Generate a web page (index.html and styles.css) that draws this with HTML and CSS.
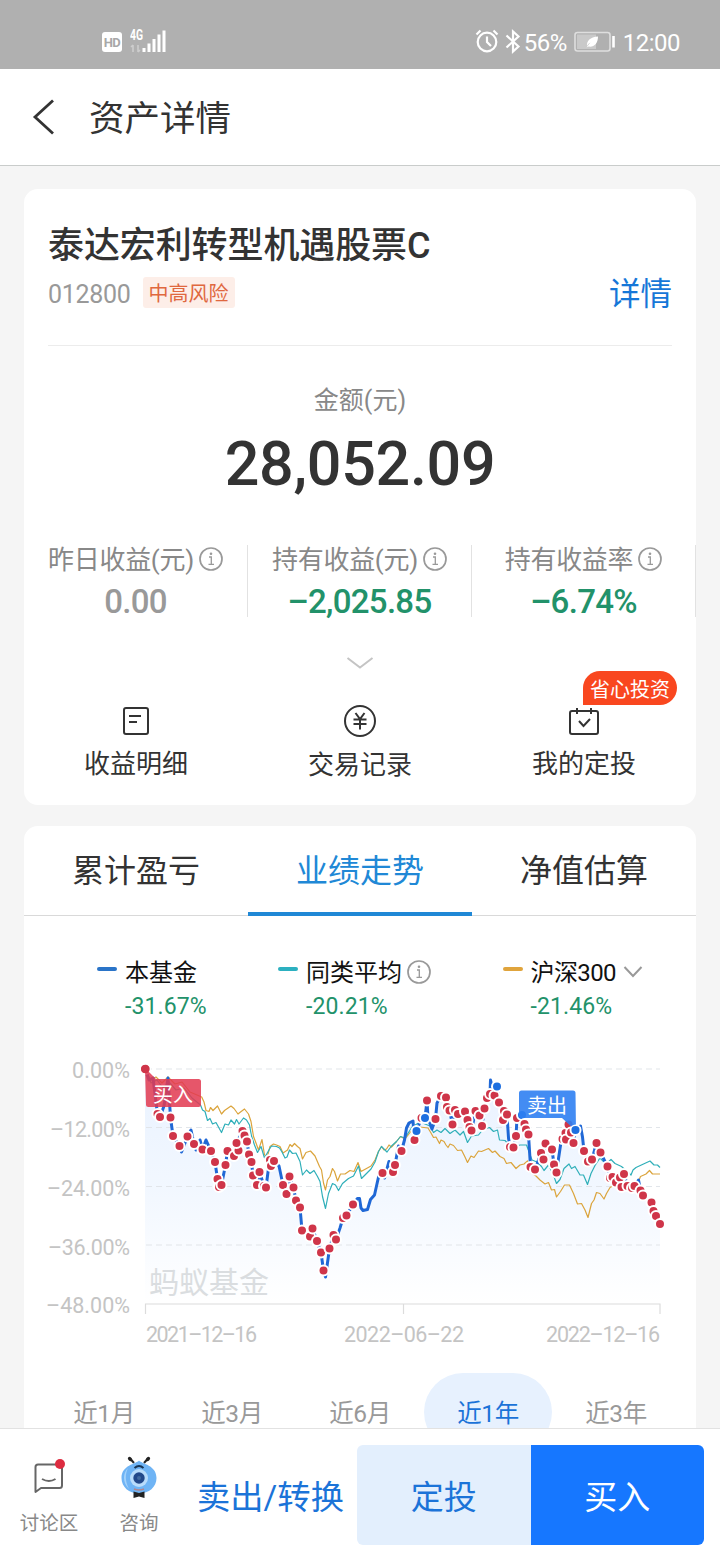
FILE: index.html
```html
<!DOCTYPE html>
<html lang="zh-CN">
<head>
    <meta charset="UTF-8">
    <meta name="viewport" content="width=device-width, initial-scale=1.0">
    <title>资产详情</title>
    <link rel="stylesheet" href="styles.css">
</head>
<body>

<div class="app">
    <div class="status-bar">
        <div class="status-left">
            <span class="hd">HD</span>
            <svg width="37" height="32" viewBox="0 -3 37 32">
                <text x="0" y="10.500" class="net" textLength="13" lengthAdjust="spacingAndGlyphs">4G</text>
                <path d="M3 16v7M1 18l2-2M8 16v7M8 23l2-2" stroke="#cdcdcd" stroke-width="1.600" fill="none"/>
                <path d="M14 19v4M19 14.500v8.500M24 10v13M29 5.500v17.500M34 1.500v21.500" stroke="#fff" stroke-width="3" stroke-linecap="butt"/>
            </svg>
        </div>
        <div class="status-right">
            <svg width="24" height="26" viewBox="0 0 24 26" fill="none" stroke="#fff" stroke-width="2.200">
                <circle cx="12" cy="13" r="9.300"/>
                <path d="M12 7.500v5.500l4 4M1.500 5.500l4-4M22.500 5.500l-4-4"/>
            </svg>
            <svg class="bluetooth" width="16" height="26" viewBox="0 0 16 26" fill="none" stroke="#fff" stroke-width="2.200">
                <path d="M1.500 6.500l12 11-5.500 5V2.500l5.500 5-12 11"/>
            </svg>
            <span class="percent">56%</span>
            <svg class="battery" width="41" height="22" viewBox="0 0 41 22">
                <rect x="1" y="1.500" width="35" height="18.500" rx="2.500" fill="none" stroke="#dedede" stroke-width="1.600"/>
                <rect x="3" y="3.500" width="19" height="14.500" fill="#c9c9c9"/>
                <path d="M12.500 16.500c1-1 2-3 4-5c-2 1-3 2.500-3.500 3.500c-.5-5 3-9 11-9.500c0 7-4 11-9.500 10z" fill="#fff"/>
                <path d="M39.500 5v11.500" stroke="#fff" stroke-width="2.600"/>
            </svg>
            <span class="clock">12:00</span>
        </div>
    </div>

    <div class="nav">
        <svg width="24" height="38" viewBox="0 0 24 38" fill="none" stroke="#333" stroke-width="2.800">
            <path d="M21 2.500L3 19l18 16.500"/>
        </svg>
        <h1>资产详情</h1>
    </div>

    <div class="content">
        <div class="card asset">
            <h2 class="fund-name">泰达宏利转型机遇股票C</h2>
            <div class="fund-info">
                <span class="fund-code">012800</span>
                <span class="risk-tag">中高风险</span>
                <a class="detail-link">详情</a>
            </div>
            <div class="amount-label">金额(元)</div>
            <div class="amount">28,052.09</div>

            <div class="stats">
                <div class="stat">
                    <div class="stat-label">昨日收益(元)<svg class="info" viewBox="0 0 24 24"><use href="#icon-info"/></svg></div>
                    <div class="stat-value flat">0.00</div>
                </div>
                <div class="stat">
                    <div class="stat-label">持有收益(元)<svg class="info" viewBox="0 0 24 24"><use href="#icon-info"/></svg></div>
                    <div class="stat-value">–2,025.85</div>
                </div>
                <div class="stat">
                    <div class="stat-label">持有收益率<svg class="info" viewBox="0 0 24 24"><use href="#icon-info"/></svg></div>
                    <div class="stat-value">–6.74%</div>
                </div>
            </div>

            <svg class="expand" width="28" height="14" viewBox="0 0 28 14" fill="none" stroke="#c4c4c4" stroke-width="2">
                <path d="M1.500 2L14 11.500L26.500 2"/>
            </svg>

            <div class="actions">
                <div class="action">
                    <svg width="34" height="34" viewBox="0 0 34 34" fill="none" stroke="#333" stroke-width="2">
                        <rect x="5" y="4" width="24" height="26" rx="2"/>
                        <path d="M10 12h12M10 18h8"/>
                    </svg>
                    <span>收益明细</span>
                </div>
                <div class="action">
                    <svg width="34" height="34" viewBox="0 0 34 34" fill="none" stroke="#333" stroke-width="2">
                        <circle cx="17" cy="17" r="15"/>
                        <path d="M12.500 9l4.500 6 4.500-6M17 15v10.500M10.500 15.500h13M10.500 20h13"/>
                    </svg>
                    <span class="lower">交易记录</span>
                </div>
                <div class="action">
                    <svg width="34" height="34" viewBox="0 0 34 34" fill="none" stroke="#333" stroke-width="2">
                        <rect x="3" y="7" width="28" height="23" rx="2"/>
                        <path d="M10 4v6M24 4v6M12 17l4.500 5 6.500-7"/>
                    </svg>
                    <span>我的定投</span>
                    <em class="badge">省心投资</em>
                </div>
            </div>
        </div>

        <div class="card trend">
            <div class="tabs">
                <div class="tab">累计盈亏</div>
                <div class="tab active">业绩走势</div>
                <div class="tab">净值估算</div>
            </div>

            <div class="legend">
                <div class="legend-item fund">
                    <div class="legend-name">本基金</div>
                    <div class="legend-value">-31.67%</div>
                </div>
                <div class="legend-item peer">
                    <div class="legend-name">同类平均<svg class="info" viewBox="0 0 24 24"><use href="#icon-info"/></svg></div>
                    <div class="legend-value">-20.21%</div>
                </div>
                <div class="legend-item index">
                    <div class="legend-name">沪深300<svg class="arrow" width="20" height="14" viewBox="0 0 20 14" fill="none" stroke="#999" stroke-width="2"><path d="M1.500 2L10 11l8.500-9"/></svg></div>
                    <div class="legend-value">-21.46%</div>
                </div>
            </div>

            <svg class="chart" width="672" height="310" viewBox="24 1040 672 310">
                <defs>
                    <linearGradient id="area-fill" gradientUnits="userSpaceOnUse" x1="0" y1="1080" x2="0" y2="1304">
                        <stop offset="0" stop-color="#1677ff" stop-opacity=".09"/>
                        <stop offset=".5" stop-color="#1677ff" stop-opacity=".055"/>
                        <stop offset="1" stop-color="#1677ff" stop-opacity="0"/>
                    </linearGradient>
                </defs>
                <path id="area" fill="url(#area-fill)"/>
                <g stroke="#e1e5ea" stroke-width="1.200" stroke-dasharray="6 4">
                    <path d="M146 1069H660M146 1127.500H660M146 1186.500H660M146 1245H660"/>
                </g>
                <path d="M145.500 1314V1304H660V1314M403.500 1304V1314" fill="none" stroke="#dcdcdc" stroke-width="1.200"/>
                <g class="axis-y">
                    <text x="72" y="1078" textLength="58">0.00%</text>
                    <text x="50" y="1137" textLength="80">–12.00%</text>
                    <text x="47" y="1196" textLength="83">–24.00%</text>
                    <text x="48" y="1255" textLength="82">–36.00%</text>
                    <text x="46" y="1313" textLength="84">–48.00%</text>
                </g>
                <g class="axis-x">
                    <text x="146" y="1342" textLength="111">2021–12–16</text>
                    <text x="344" y="1342" textLength="120">2022–06–22</text>
                    <text x="546" y="1342" textLength="114">2022–12–16</text>
                </g>
                <text x="149" y="1293" class="watermark">蚂蚁基金</text>
                <g fill="none" stroke-width="1.200" stroke-linejoin="round">
                    <path stroke="#dba43c" d="M146 1069L150 1080 156 1077 162 1083 168 1077 175 1084 182 1082 190 1092 201.700 1097 204 1102 206 1110.500 209 1111.500 210.500 1107.500 213 1110.500 217.500 1106 221.500 1114 224.500 1110.500 231 1106 234 1108.500 238 1114 240.500 1112 244.500 1109 248.500 1114 251 1121.500 253.500 1136.500 256 1143 258.500 1150 262 1139.500 264.500 1155 267.500 1156 270 1146.500 273.500 1144 276.500 1145 280 1146.500 283 1153 287.500 1150 290 1144.500 292 1146.500 294.500 1143.500 297.500 1146.500 300 1148.500 302.500 1159 306 1152.500 310.500 1151 315 1156 319.500 1166.500 321.500 1170 323.500 1183 325.500 1190 327.500 1180 330 1176.500 332.500 1168.500 334.500 1171.500 337.500 1181 340.500 1174 345 1174 350 1170.500 354 1171.500 358 1162.500 361 1171.500 366.500 1168.500 371 1166 375 1160 378.500 1151.500 381.500 1146.500 384 1150 386.500 1149 389 1145 391.500 1147 396.500 1141.500 400.500 1136.500 405 1139 412 1130 420 1127 428 1128 431 1133 433.500 1137.500 436 1137 439.500 1143.500 441 1140 444 1141.500 446 1145 448 1147.500 450 1144 453.500 1145.500 457.500 1150.500 461.500 1150 465 1157 467.500 1162.500 471 1156 474 1157.500 478.500 1151 481.500 1151.500 485 1150 488.500 1148.500 492.500 1152.500 495 1151 500 1156.500 504 1158.500 506.500 1163.500 511 1162.500 516 1168.500 520 1165 524 1164 527.500 1161 530 1172 536 1176 540 1180 545 1184 548.500 1182.500 551.500 1190 554.500 1189.500 556.500 1197 560.500 1191.500 564.500 1185 569.500 1185 573.500 1193.500 577.500 1204 581.500 1203.500 585 1210 588 1217.500 591.500 1203.500 594 1200 596.500 1192.500 600 1193.500 604 1199 606.500 1193.500 610 1187.500 616 1184 624 1179 632 1185 638.500 1181.500 640.500 1176.500 646 1174 649.500 1170.500 652.500 1174 660 1174"/>
                    <path stroke="#2fafb9" d="M146 1069L151 1083 157 1080 163 1088 169 1082 176 1090 184 1088 192 1098 200.500 1105 202.500 1110 205 1111.500 207.500 1120.500 210 1118.500 212.500 1124 216 1122.500 221.500 1132.500 225 1124 228.500 1125 231 1120 234.500 1124 236.500 1119.500 239 1124 243.500 1118 246.500 1120 249.500 1125 251.500 1136 254.500 1145 257.500 1152.500 261 1146.500 264.500 1158 269.500 1149 271.500 1146 276.500 1146.500 279.500 1148 282 1152 285 1158 287 1157 289.500 1150 292.500 1153.500 296 1153 300 1161.500 302.500 1175 306.500 1170 310 1173.500 314 1170.500 317.500 1176.500 320 1181.500 322.500 1196.500 325.500 1208.500 328.500 1193.500 332.500 1183.500 335.500 1185 338.500 1190.500 342.500 1183.500 348.500 1178.500 353.500 1176 358.500 1166 361.500 1178.500 366.500 1173.500 371 1169 375 1162 378.500 1151.500 381.500 1146.500 384 1149 387 1152 391.500 1146 396.500 1141.500 400.500 1136.500 405 1138 412 1127 420 1122 430 1126 433.500 1132.500 437 1130 441 1132.500 445 1128.500 450 1133.500 455 1130 460 1135 463.500 1131.500 467.500 1142.500 471.500 1136 478.500 1135 482.500 1130 489.500 1127.500 493.500 1131.500 497.500 1130 499.500 1140 505 1140.500 512 1148 520 1145 526.500 1145 532 1160 537 1162 541.500 1166.500 544 1170.500 548.500 1165 553 1174 556.500 1183.500 560 1179.500 564 1168.500 569 1164 571.500 1168.500 575 1166.500 580 1175 583.500 1175 587.500 1184.500 591 1173.500 595 1165.500 600 1158 606 1164 611 1159.500 615 1163.500 621.500 1166.500 631 1175 633 1170 636 1167.500 643.500 1164 650 1161 654 1165 657.500 1165 660 1167.500"/>
                </g>
                <path id="fund-line" fill="none" stroke="#2068d6" stroke-width="3" stroke-linejoin="round"/>
                <g id="dots"></g>
                <g class="marker">
                    <path d="M145 1068L156 1079H198.500Q201 1079 201 1081.500V1104.500Q201 1107 198.500 1107H148.500Q146 1107 146 1104.500Z" fill="#e23a52" fill-opacity=".86"/>
                    <text x="153" y="1102">买入</text>
                    <path d="M576 1131L562 1118H521.500Q519 1118 519 1115.500V1093Q519 1090.500 521.500 1090.500H573Q575.500 1090.500 575.500 1093Z" fill="#2f80f2" fill-opacity=".9"/>
                    <text x="527" y="1113">卖出</text>
                </g>
                <circle cx="145.500" cy="1069" r="4.200" fill="#cf3549"/>
                <circle cx="575.500" cy="1130" r="4.800" fill="#1d6fe0" stroke="#fff" stroke-width="1.500"/>
            </svg>

            <div class="ranges">
                <div class="range">近1月</div>
                <div class="range">近3月</div>
                <div class="range">近6月</div>
                <div class="range active">近1年</div>
                <div class="range">近3年</div>
            </div>
        </div>
    </div>

    <div class="bottom-bar">
        <div class="entry">
            <svg width="34" height="42" viewBox="0 0 34 42" fill="none" stroke="#666" stroke-width="2">
                <path d="M3.500 36V11Q3.500 8.500 6 8.500H27.500Q30 8.500 30 11V29.500Q30 32 27.500 32H9Z" stroke-linejoin="round"/>
                <path d="M10 23q7 4 13.500 0"/>
                <circle cx="28" cy="8" r="5" fill="#dd2c40" stroke="none"/>
            </svg>
            <span>讨论区</span>
        </div>
        <div class="entry">
            <svg width="38" height="42" viewBox="0 0 38 42">
                <path d="M14 7L10.500 3M24 7L27.500 3" stroke="#222" stroke-width="2"/>
                <ellipse cx="10" cy="3" rx="2.400" ry="1.800" transform="rotate(45 10 3)" fill="#222"/>
                <ellipse cx="28" cy="3" rx="2.400" ry="1.800" transform="rotate(-45 28 3)" fill="#222"/>
                <path d="M19 4.500C22 8 36.500 9 36.500 22C36.500 31 29 37.500 19 37.500S1.500 31 1.500 22C1.500 9 16 8 19 4.500Z" fill="#6fb4f5"/>
                <path d="M8 12C3 17 2 26 9 33C5 25 5 18 8 12Z" fill="#a3d2fb"/>
                <path d="M14.500 12q4.500-4 9 0" fill="none" stroke="#173455" stroke-width="2"/>
                <circle cx="19" cy="22" r="9" fill="#b9dcfb"/>
                <circle cx="19" cy="22" r="5.700" fill="#23498a"/>
                <circle cx="19" cy="22" r="2" fill="#42699f"/>
                <path d="M14 33q5 2 10 0" fill="none" stroke="#b2868e" stroke-width="1.600"/>
                <path d="M13.500 35.500l5.500 1.500 5.500-1.500v6.500l-5.500-1.500-5.500 1.500z" fill="#222"/>
            </svg>
            <span>咨询</span>
        </div>
        <div class="sell">卖出/转换</div>
        <div class="buttons">
            <div class="btn plan">定投</div>
            <div class="btn buy">买入</div>
        </div>
    </div>
</div>

<svg class="symbols" width="0" height="0">
    <symbol id="icon-info" viewBox="0 0 24 24">
        <circle cx="12" cy="12" r="11" fill="none" stroke="#999" stroke-width="1.700"/>
        <path d="M10 10h2.300v7M9.500 17.300h5.500" fill="none" stroke="#999" stroke-width="1.300"/>
        <circle cx="12" cy="6.700" r="1.300" fill="#999"/>
    </symbol>
</svg>

<script src="chart.js"></script>
</body>
</html>
```
FILE: styles.css
```css
* {
    margin: 0;
    padding: 0;
    box-sizing: border-box;
}

body {
    font-family: Roboto, 'Noto Sans CJK SC', sans-serif;
    background-color: #f5f5f5;
    color: #333;
}

.app {
    width: 720px;
    height: 1560px;
    display: flex;
    flex-direction: column;
    overflow: hidden;
}

.symbols {
    position: absolute;
}

/* status bar */
.status-bar {
    height: 69px;
    flex-shrink: 0;
    padding: 14px 40px 0 102px;
    background-color: #b0b0b0;
    color: #fff;
    display: flex;
    justify-content: space-between;
    align-items: center;
}

.status-left,
.status-right {
    display: flex;
    align-items: center;
}

.hd {
    width: 20px;
    height: 20px;
    margin-right: 8px;
    border-radius: 3px;
    background-color: #fff;
    color: #a8a8a8;
    font-size: 13px;
    font-weight: 700;
    line-height: 21px;
    text-align: center;
    letter-spacing: -0.5px;
}

.net {
    fill: #fff;
    font-size: 14px;
    font-weight: 700;
}

.bluetooth {
    margin: 0 3px 0 6px;
}

.percent,
.clock {
    font-size: 24px;
    line-height: 28px;
    letter-spacing: -0.5px;
    margin-top: 3px;
}

.battery {
    margin: 0 8px 0 7px;
}

/* title bar */
.nav {
    height: 97px;
    flex-shrink: 0;
    padding-left: 32px;
    background-color: #fff;
    border-bottom: 1px solid #c9cccb;
    display: flex;
    align-items: center;
    gap: 33px;
}

.nav h1 {
    padding-top: 3px;
    font-size: 35.5px;
    font-weight: 400;
    line-height: 48px;
}

.content {
    flex: 1;
    min-height: 0;
    padding: 23px 24px 0;
    overflow: hidden;
}

.card {
    background-color: #fff;
    border-radius: 14px;
}

/* asset card */
.asset {
    height: 616px;
    padding-top: 32px;
}

.fund-name {
    padding-left: 24px;
    font-size: 36px;
    font-weight: 500;
    line-height: 50px;
    letter-spacing: -0.1px;
}

.fund-info {
    height: 75px;
    margin: 0 24px;
    padding-top: 6px;
    border-bottom: 1px solid #ececec;
    display: flex;
    align-items: flex-start;
}

.fund-code {
    font-size: 25px;
    line-height: 35px;
    color: #999;
    letter-spacing: -0.3px;
}

.risk-tag {
    height: 31px;
    margin-left: 12px;
    padding: 0 6px;
    border-radius: 3px;
    background-color: #fdeee8;
    color: #e0683f;
    font-size: 20px;
    line-height: 34px;
}

.detail-link {
    margin-left: auto;
    color: #1677d8;
    font-size: 31.5px;
    line-height: 36px;
}

.amount-label {
    margin-top: 37px;
    text-align: center;
    color: #888;
    font-size: 25px;
    line-height: 36px;
}

.amount {
    margin-top: 7px;
    text-align: center;
    font-size: 61px;
    font-weight: 500;
    line-height: 76px;
    letter-spacing: -0.3px;
}

.stats {
    margin-top: 43px;
    height: 72px;
    display: grid;
    grid-template-columns: repeat(3, 1fr);
    grid-template-rows: 72px;
}

.stat {
    border-right: 1px solid #e2e2e2;
    display: flex;
    flex-direction: column;
    align-items: center;
}

.stat-label {
    display: flex;
    align-items: center;
    color: #888;
    font-size: 26px;
    line-height: 30px;
    letter-spacing: -0.3px;
}

.info {
    width: 24px;
    height: 24px;
    margin: -2px 0 0 5px;
}

.stat-value {
    margin-top: 8px;
    color: #22926a;
    font-size: 33px;
    font-weight: 500;
    line-height: 38px;
    letter-spacing: -0.7px;
}

.stat-value.flat {
    color: #999;
}

.expand {
    display: block;
    margin: 39px auto 0;
}

.actions {
    margin-top: 34px;
    display: grid;
    grid-template-columns: repeat(3, 1fr);
}

.action {
    position: relative;
    display: flex;
    flex-direction: column;
    align-items: center;
    font-size: 26px;
    line-height: 36px;
}

.action span {
    margin-top: 8px;
}

.action span.lower {
    margin-top: 9px;
}

.badge {
    position: absolute;
    left: 111px;
    top: -33px;
    width: 94px;
    height: 34px;
    border-radius: 17px 17px 17px 0;
    background-color: #f9471f;
    color: #fff;
    font-size: 20px;
    font-style: normal;
    line-height: 38px;
    text-align: center;
}

/* trend card */
.trend {
    margin-top: 21px;
    height: 700px;
}

.tabs {
    height: 90px;
    border-bottom: 1px solid #d9d9d9;
    display: grid;
    grid-template-columns: repeat(3, 1fr);
}

.tab {
    height: 90px;
    text-align: center;
    font-size: 32px;
    line-height: 91px;
}

.tab.active {
    color: #2088d6;
    border-bottom: 4px solid #2088d6;
}

.legend {
    height: 124px;
    padding: 41px 53px 0 73px;
    display: flex;
    justify-content: space-between;
}

.legend-item {
    position: relative;
    padding-left: 28px;
}

.legend-item::before {
    content: '';
    position: absolute;
    left: 0;
    top: 10px;
    width: 20px;
    height: 4px;
    border-radius: 2px;
    background-color: #2a74c8;
}

.legend-item.peer::before {
    background-color: #2cb0c0;
}

.legend-item.index::before {
    background-color: #e0a43c;
}

.legend-name {
    display: flex;
    align-items: center;
    color: #111;
    font-size: 24px;
    line-height: 32px;
}

.legend-value {
    margin-top: 3px;
    color: #22926a;
    font-size: 23px;
    line-height: 30px;
    letter-spacing: 0.1px;
}

.legend-item.index .legend-name {
    letter-spacing: -0.6px;
}

.arrow {
    margin: -2px 0 0 7px;
}

.chart {
    display: block;
}

.axis-y,
.axis-x {
    fill: #c4c4c4;
    font-size: 21.5px;
}

.watermark {
    fill: #dadde0;
    font-size: 30px;
}

.marker text {
    fill: #fff;
    font-size: 20px;
}

.ranges {
    padding: 23px 16px 0;
    display: grid;
    grid-template-columns: repeat(5, 1fr);
}

.range {
    height: 78px;
    border-radius: 39px;
    color: #999;
    font-size: 24.5px;
    line-height: 81px;
    letter-spacing: -0.5px;
    text-align: center;
}

.range.active {
    background-color: #e7f1fe;
    color: #1b73d8;
}

/* bottom bar */
.bottom-bar {
    height: 132px;
    flex-shrink: 0;
    padding: 16px 16px 0 4px;
    background-color: #fff;
    border-top: 1px solid #e2e2e2;
    display: flex;
}

.entry {
    width: 90px;
    padding-top: 11px;
    display: flex;
    flex-direction: column;
    align-items: center;
    color: #888;
    font-size: 19.5px;
    line-height: 28px;
}

.entry span {
    margin-top: 12px;
}

.sell {
    flex: 1;
    text-align: center;
    color: #1b73d8;
    font-size: 33.3px;
    line-height: 106px;
}

.buttons {
    width: 347px;
    height: 100px;
    border-radius: 6px;
    overflow: hidden;
    display: flex;
}

.btn {
    flex: 1;
    text-align: center;
    font-size: 33px;
    line-height: 106px;
}

.plan {
    background-color: #e3effd;
    color: #1b73d8;
}

.buy {
    background-color: #1677ff;
    color: #fff;
}
```
FILE: chart.js
```js
// x, y, kind: 'b' = buy, 's' = sell, none = plain line point
const points = [
    [145, 1069, 'b'], [149, 1080], [153, 1078], [157.5, 1114, 'b'], [160, 1117, 'b'], [164, 1106],
    [168, 1078], [170.5, 1117.5, 'b'], [173, 1136, 'b'], [179.5, 1146, 'b'], [181.5, 1152], [187.5, 1136.5, 'b'],
    [191, 1130], [194, 1144, 'b'], [196, 1150], [200, 1140], [202.5, 1149.5, 'b'], [206, 1140], [211, 1151, 'b'],
    [215, 1162, 'b'], [217.5, 1179, 'b'], [219, 1187, 'b'], [221.5, 1185, 'b'], [225.5, 1165, 'b'],
    [227.5, 1151, 'b'], [234, 1156, 'b'], [238.5, 1150.5, 'b'], [236.5, 1143, 'b'], [242.5, 1131, 'b'],
    [244.5, 1135.5, 'b'], [247, 1141.5, 'b'], [249, 1154.5, 'b'], [251.5, 1162, 'b'], [253, 1175.5, 'b'],
    [257, 1185, 'b'], [259.5, 1172, 'b'], [264, 1186, 'b'], [266, 1187.5, 'b'], [268, 1172], [270, 1160, 'b'],
    [271, 1166, 'b'], [274, 1161, 'b'], [279, 1166], [283, 1185, 'b'], [286.5, 1194, 'b'], [289.5, 1176.5, 'b'],
    [293.5, 1187.5, 'b'], [296, 1200.5, 'b'], [300, 1207.5, 'b'], [302, 1230.5, 'b'], [310, 1236.5, 'b'],
    [312.5, 1228.5, 'b'], [317, 1241, 'b'], [321, 1252.5, 'b'], [323.5, 1270.5, 'b'], [325.5, 1277],
    [329.5, 1248.5, 'b'], [333.5, 1235, 'b'], [336, 1239.5, 'b'], [340, 1228], [343, 1218, 'b'],
    [346.5, 1215.5, 'b'], [353, 1204.5, 'b'], [357.5, 1198.5], [359.5, 1198.5], [361, 1208], [363, 1210.5],
    [367.5, 1209.5], [370.5, 1199.5], [374.5, 1195], [377.5, 1181.5], [379, 1175], [382.5, 1173, 'b'],
    [384.5, 1178], [389, 1161.5], [393, 1172, 'b'], [395, 1165, 'b'], [398.5, 1146], [401.5, 1151, 'b'],
    [404.5, 1140], [406.5, 1128], [409, 1123], [413, 1121], [414.5, 1140, 'b'], [416.5, 1131, 's'],
    [421.5, 1118, 'b'], [425, 1118, 's'], [427, 1100.5, 'b'], [428, 1118], [432, 1129], [435.5, 1119, 'b'],
    [437, 1103], [441, 1096, 'b'], [446, 1097.5, 'b'], [447, 1107, 'b'], [449.5, 1110.5, 'b'],
    [452.5, 1124.5, 'b'], [455, 1110, 'b'], [458, 1114, 'b'], [465, 1111.5, 'b'], [467.5, 1120, 'b'],
    [469.5, 1127, 'b'], [471.5, 1130.5, 'b'], [475.5, 1111, 'b'], [479.5, 1115.5, 'b'], [482, 1126, 'b'],
    [484.5, 1108.5, 'b'], [487, 1098, 'b'], [490, 1094, 'b'], [490.5, 1080], [494.5, 1095.5, 'b'],
    [497, 1086.5, 's'], [499, 1102.5, 'b'], [504, 1111, 'b'], [503, 1120, 'b'], [507, 1114.5, 'b'],
    [508.5, 1138], [510, 1147, 'b'], [513.5, 1147.5, 'b'], [516, 1136, 'b'], [517, 1118, 'b'], [522, 1115, 's'],
    [524.5, 1124, 'b'], [526, 1129.5, 'b'], [528.5, 1134.5, 'b'], [530.5, 1167, 'b'], [535, 1169.5, 'b'],
    [541, 1153, 'b'], [543.5, 1159.5, 'b'], [545.5, 1143.5, 'b'], [552, 1149.5, 'b'], [554, 1164.5, 'b'],
    [556.5, 1172.5, 'b'], [558, 1162], [561, 1142], [562.5, 1139, 'b'], [565.5, 1133, 'b'], [568.5, 1124.5, 'b'],
    [566, 1139.5, 'b'], [571, 1132.5, 'b'], [573.5, 1143, 'b'], [575.5, 1130, 's'], [580.5, 1126],
    [582.5, 1137], [584, 1151, 'b'], [588, 1161.5, 'b'], [592, 1159.5, 'b'], [596.5, 1143, 'b'],
    [600.5, 1152.5, 'b'], [607.5, 1166.5, 'b'], [610, 1178, 'b'], [612.5, 1177, 'b'], [616, 1182.5, 'b'],
    [620, 1177.5, 'b'], [621.5, 1187, 'b'], [624, 1174, 'b'], [627.5, 1186, 'b'], [632, 1188, 'b'],
    [634.5, 1186, 'b'], [638.5, 1180], [640.5, 1190.5, 'b'], [643, 1195.5, 'b'], [651.5, 1202.5, 'b'],
    [653.5, 1211, 'b'], [656, 1216, 'b'], [660, 1224, 'b']
];

const line = 'M' + points.map(p => p[0] + ' ' + p[1]).join('L');
document.getElementById('fund-line').setAttribute('d', line);
document.getElementById('area').setAttribute('d', line + 'V1304H145Z');

const dots = document.getElementById('dots');
points.filter(p => p[2]).forEach(([x, y, kind]) => {
    const dot = document.createElementNS('http://www.w3.org/2000/svg', 'circle');
    dot.setAttribute('cx', x);
    dot.setAttribute('cy', y);
    dot.setAttribute('r', 5);
    dot.setAttribute('fill', kind === 's' ? '#1d6fe0' : '#cf3549');
    dot.setAttribute('stroke', '#fff');
    dot.setAttribute('stroke-width', 2);
    dots.appendChild(dot);
});
```
